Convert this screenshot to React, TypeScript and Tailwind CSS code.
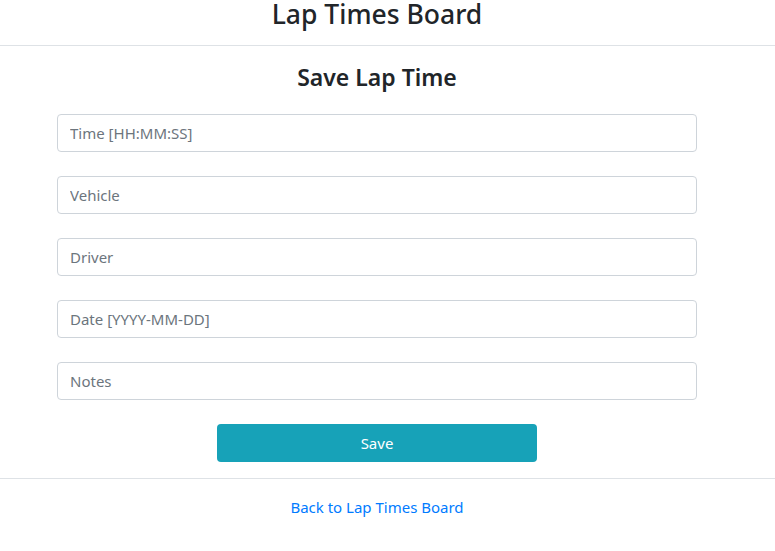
export default function App() {
  const fields = ["Time [HH:MM:SS]", "Vehicle", "Driver", "Date [YYYY-MM-DD]", "Notes"];

  return (
    <div className="min-h-screen bg-white text-[#212529] font-['Noto_Sans',sans-serif]">
      <header className="h-[46px] border-b border-[#dee2e6]">
        <div className="w-[754px] flex justify-center">
          <h1 className="text-[26.5px] leading-[28px] font-medium">Lap Times Board</h1>
        </div>
      </header>

      <main className="w-[754px]">
        <div className="w-[640px] mx-auto">
          <h2 className="text-center text-[23px] leading-[28px] font-semibold mt-[17px] mb-[23px]">
            Save Lap Time
          </h2>

          <form className="flex flex-col gap-6">
            {fields.map((f) => (
              <input
                key={f}
                type="text"
                placeholder={f}
                className="h-[38px] w-full rounded border border-[#ced4da] px-3 text-[15px] placeholder:text-[#6c757d] outline-none"
              />
            ))}
            <button
              type="button"
              className="mx-auto h-[38px] w-[320px] rounded bg-[#17a2b8] text-white text-[15px]"
            >
              Save
            </button>
          </form>
        </div>
      </main>

      <footer className="mt-4 border-t border-[#dee2e6]">
        <div className="w-[754px] pt-[16px] text-center">
          <a href="#" className="text-[#007bff] text-[15px]">
            Back to Lap Times Board
          </a>
        </div>
      </footer>
    </div>
  );
}
